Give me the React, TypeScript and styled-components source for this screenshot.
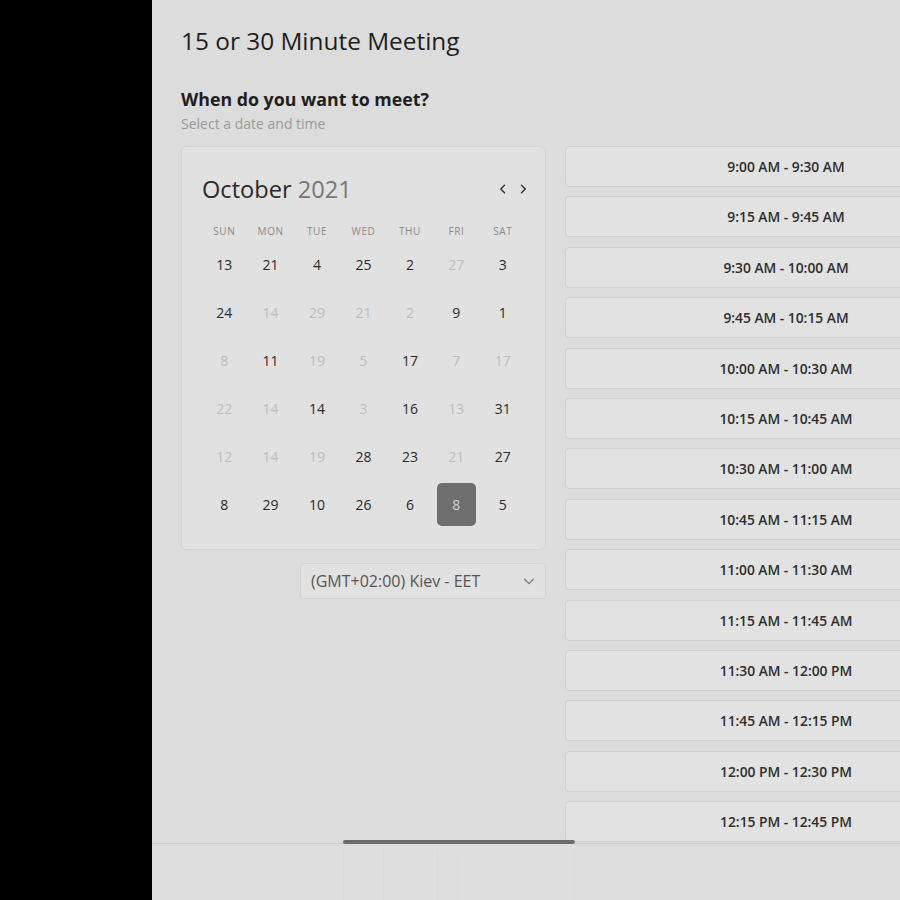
import React from "react";
import styled, { createGlobalStyle } from "styled-components";

const Global = createGlobalStyle`
  html, body { margin: 0; padding: 0; background: #000; }
  body { font-family: "Open Sans", "Noto Sans", sans-serif; }
  * { box-sizing: border-box; }
`;

const Screen = styled.div`
  display: flex;
  width: 900px;
  height: 900px;
  background: #000;
  overflow: hidden;
`;

const Side = styled.div`
  width: 152px;
  flex: none;
  background: #000;
`;

const Panel = styled.div`
  flex: 1;
  display: flex;
  flex-direction: column;
  background: #dcdcdc;
  min-width: 0;
`;

const Scroll = styled.div`
  height: 843px;
  overflow: hidden;
  padding: 24px 0 0 29px;
`;

const Title = styled.h1`
  margin: 0;
  font-size: 24.4px;
  line-height: 34px;
  font-weight: 400;
  color: #1e1e1e;
`;

const Heading = styled.h2`
  margin: 29px 0 0;
  font-size: 17.8px;
  line-height: 24px;
  font-weight: 700;
  color: #1e1e1e;
`;

const Sub = styled.div`
  margin-top: 4px;
  font-size: 14px;
  line-height: 18px;
  color: #9a9a9a;
`;

const Columns = styled.div`
  display: flex;
  gap: 19px;
  margin-top: 13px;
  align-items: flex-start;
`;

const LeftCol = styled.div`
  width: 365px;
  flex: none;
  display: flex;
  flex-direction: column;
  align-items: flex-end;
`;

const Card = styled.div`
  width: 365px;
  background: #e1e1e1;
  border: 1px solid #d4d4d4;
  border-radius: 6px;
  padding: 26px 19px 21px;
`;

const CalHead = styled.div`
  display: flex;
  align-items: center;
  justify-content: space-between;
  padding-left: 1px;
  height: 32px;
`;

const Month = styled.div`
  font-size: 23.6px;
  line-height: 32px;
  color: #2a2a2a;
  span { color: #777; }
`;

const Arrows = styled.div`
  display: flex;
  gap: 8px;
  margin-right: -3px;
`;

const ArrowBtn = styled.div`
  width: 12px;
  height: 16px;
  display: flex;
  align-items: center;
  justify-content: center;
`;

const Grid = styled.div`
  display: grid;
  grid-template-columns: repeat(7, 1fr);
  margin-top: 19px;
`;

const Dow = styled.div`
  text-align: center;
  font-size: 10px;
  line-height: 14px;
  letter-spacing: 0.6px;
  color: #8a8a8a;
  margin-bottom: 2px;
`;

const Cell = styled.div`
  height: 48px;
  display: flex;
  align-items: center;
  justify-content: center;
`;

const Day = styled.div<{ $muted?: boolean; $sel?: boolean }>`
  width: 39px;
  height: 43px;
  border-radius: 5px;
  display: flex;
  align-items: center;
  justify-content: center;
  font-size: 14px;
  color: ${(p) => (p.$sel ? "#cfcfcf" : p.$muted ? "#bcbcbc" : "#2a2a2a")};
  background: ${(p) => (p.$sel ? "#6e6e6e" : "transparent")};
`;

const Select = styled.div`
  margin-top: 13px;
  width: 246px;
  height: 36px;
  border: 1px solid #d3d3d3;
  border-radius: 4px;
  background: #e1e1e1;
  display: flex;
  align-items: center;
  justify-content: space-between;
  padding: 0 9px 0 10px;
  font-size: 16px;
  color: #555;
`;

const Slots = styled.div`
  width: 442px;
  flex: none;
  display: flex;
  flex-direction: column;
  gap: 9.4px;
`;

const Slot = styled.div`
  height: 41px;
  border: 1px solid #cfcfcf;
  border-radius: 4px;
  background: #e2e2e2;
  display: flex;
  align-items: center;
  justify-content: center;
  font-size: 13.8px;
  font-weight: 600;
  color: #2e2e2e;
`;

const Footer = styled.div`
  position: relative;
  flex: 1;
  border-top: 1px solid #cdcdcd;
  background: #dedede;
  display: flex;
  padding-left: 191px;
  padding-top: 6px;
`;

const ScrollThumb = styled.div`
  position: absolute;
  left: 191px;
  top: -4px;
  width: 232px;
  height: 4px;
  border-radius: 2px;
  background: #6c6c6c;
`;

const Ghost = styled.div`
  display: flex;
  width: 232px;
  border-left: 1px solid #d9d9d9;
  border-right: 1px solid #d9d9d9;
`;

const GhostPane = styled.div<{ $w: number }>`
  width: ${(p) => p.$w}px;
  border-right: 1px solid #dadada;
`;

const weekdays = ["SUN", "MON", "TUE", "WED", "THU", "FRI", "SAT"];

type D = [number, number]; // value, state: 0 normal, 1 muted, 2 selected
const rows: D[][] = [
  [[13, 0], [21, 0], [4, 0], [25, 0], [2, 0], [27, 1], [3, 0]],
  [[24, 0], [14, 1], [29, 1], [21, 1], [2, 1], [9, 0], [1, 0]],
  [[8, 1], [11, 0], [19, 1], [5, 1], [17, 0], [7, 1], [17, 1]],
  [[22, 1], [14, 1], [14, 0], [3, 1], [16, 0], [13, 1], [31, 0]],
  [[12, 1], [14, 1], [19, 1], [28, 0], [23, 0], [21, 1], [27, 0]],
  [[8, 0], [29, 0], [10, 0], [26, 0], [6, 0], [8, 2], [5, 0]],
];

const slots = [
  "9:00 AM - 9:30 AM",
  "9:15 AM - 9:45 AM",
  "9:30 AM - 10:00 AM",
  "9:45 AM - 10:15 AM",
  "10:00 AM - 10:30 AM",
  "10:15 AM - 10:45 AM",
  "10:30 AM - 11:00 AM",
  "10:45 AM - 11:15 AM",
  "11:00 AM - 11:30 AM",
  "11:15 AM - 11:45 AM",
  "11:30 AM - 12:00 PM",
  "11:45 AM - 12:15 PM",
  "12:00 PM - 12:30 PM",
  "12:15 PM - 12:45 PM",
];

const Chevron = ({ dir }: { dir: "l" | "r" | "d" }) => {
  const d = dir === "l" ? "M10 3 L5 8 L10 13" : dir === "r" ? "M6 3 L11 8 L6 13" : "M3 6 L8 11 L13 6";
  return (
    <svg width={dir === "d" ? 14 : 12} height={dir === "d" ? 14 : 12} viewBox="0 0 16 16" fill="none">
      <path d={d} stroke={dir === "d" ? "#777" : "#333"} strokeWidth={dir === "d" ? 1.4 : 2} strokeLinecap="round" strokeLinejoin="round" />
    </svg>
  );
};

export default function App() {
  return (
    <Screen>
      <Global />
      <Side />
      <Panel>
        <Scroll>
          <Title>15 or 30 Minute Meeting</Title>
          <Heading>When do you want to meet?</Heading>
          <Sub>Select a date and time</Sub>
          <Columns>
            <LeftCol>
              <Card>
                <CalHead>
                  <Month>
                    October <span>2021</span>
                  </Month>
                  <Arrows>
                    <ArrowBtn>
                      <Chevron dir="l" />
                    </ArrowBtn>
                    <ArrowBtn>
                      <Chevron dir="r" />
                    </ArrowBtn>
                  </Arrows>
                </CalHead>
                <Grid>
                  {weekdays.map((w) => (
                    <Dow key={w}>{w}</Dow>
                  ))}
                  {rows.flatMap((r, ri) =>
                    r.map(([v, s], ci) => (
                      <Cell key={`${ri}-${ci}`}>
                        <Day $muted={s === 1} $sel={s === 2}>
                          {v}
                        </Day>
                      </Cell>
                    ))
                  )}
                </Grid>
              </Card>
              <Select>
                <span>(GMT+02:00) Kiev - EET</span>
                <Chevron dir="d" />
              </Select>
            </LeftCol>
            <Slots>
              {slots.map((s) => (
                <Slot key={s}>{s}</Slot>
              ))}
            </Slots>
          </Columns>
        </Scroll>
        <Footer>
          <ScrollThumb />
          <Ghost>
            <GhostPane $w={40} />
            <GhostPane $w={54} />
            <GhostPane $w={20} />
          </Ghost>
        </Footer>
      </Panel>
    </Screen>
  );
}
